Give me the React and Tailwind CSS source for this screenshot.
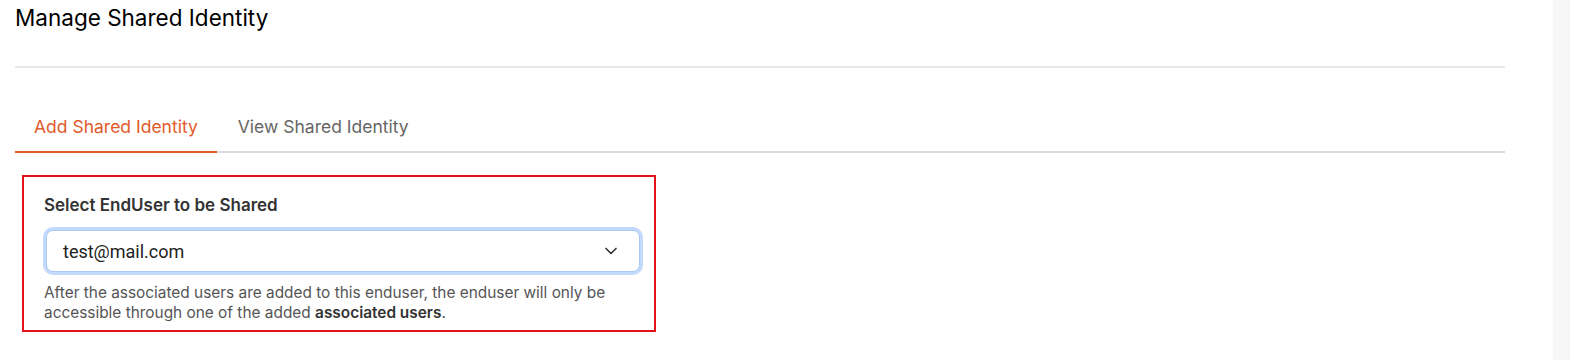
import { ChevronDown } from "lucide-react";

function App() {
  return (
    <div className="flex w-[1570px] h-[360px] bg-white font-['Inter','Noto_Sans',sans-serif]">
      <div className="flex-1 pl-[15px] pr-[48px]">
        <h1 className="pt-[5px] h-[66px] text-[22.5px] leading-[26px] text-black">
          Manage Shared Identity
        </h1>
        <div className="h-[2px] bg-[#e8e8e8]" />
        <div className="mt-[33px] flex border-b-2 border-[#dcdcdc]">
          <button className="px-[19px] pt-[16px] pb-[14px] -mb-[2px] border-b-2 border-[#e05a2b] text-[17.5px] leading-[20px] text-[#e05a2b]">
            Add Shared Identity
          </button>
          <button className="px-[21px] pt-[16px] pb-[14px] text-[17.5px] leading-[20px] text-[#666]">
            View Shared Identity
          </button>
        </div>
        <div className="mt-[22px] ml-[7px] w-[634px] border-2 border-[#e3121b] pl-[20px] pr-[12px] pt-[17px] pb-[7px]">
          <label className="block text-[17px] leading-[22px] font-semibold text-[#333]">
            Select EndUser to be Shared
          </label>
          <div className="mt-[14px] rounded-[7px] ring-[3px] ring-[#c2dafb] border border-[#a9c8f3] bg-white h-[42px] flex items-center justify-between pl-[16px] pr-[18px] mx-[2px]">
            <span className="text-[18px] text-[#222] font-['Roboto','Liberation_Sans',sans-serif]">
              test@mail.com
            </span>
            <ChevronDown size={20} strokeWidth={2} className="text-[#333]" />
          </div>
          <p className="mt-[11px] text-[15.4px] leading-[20px] text-[#555]">
            After the associated users are added to this enduser, the enduser will only be
            <br />
            accessible through one of the added{" "}
            <span className="font-semibold text-[#333]">associated users</span>.
          </p>
        </div>
      </div>
      <div className="w-[17px] bg-[#f7f7f7]" />
    </div>
  );
}

export default App;
